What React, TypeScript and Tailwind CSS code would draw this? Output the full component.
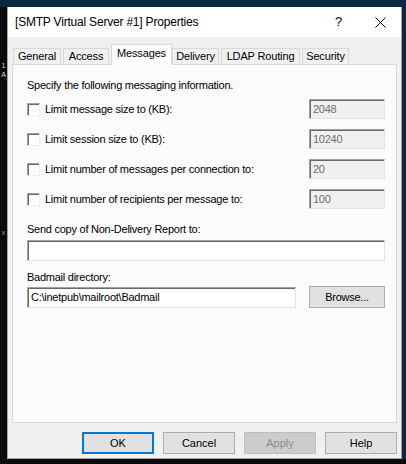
const font = { fontFamily: '"Liberation Sans", Arial, sans-serif' };

function CheckBox() {
  return (
    <div className="h-[13px] w-[13px] shrink-0 border border-t-[#a0a0a0] border-l-[#a0a0a0] border-r-[#f0f0f0] border-b-[#f0f0f0] bg-white shadow-[inset_1px_1px_0_#696969]" />
  );
}

function Field({ value, disabled, className = "" }: { value?: string; disabled?: boolean; className?: string }) {
  return (
    <div
      className={`flex items-center border border-t-[#a0a0a0] border-l-[#a0a0a0] border-r-[#e3e3e3] border-b-[#e3e3e3] pl-[3px] shadow-[inset_1px_1px_0_#696969] ${
        disabled ? "bg-[#f0f0f0] text-[#6d6d6d]" : "bg-white text-black"
      } ${className}`}
    >
      {value}
    </div>
  );
}

function Button({ label, variant = "normal" }: { label: string; variant?: "normal" | "default" | "disabled" }) {
  const look =
    variant === "default"
      ? "border-2 border-[#0078d7] bg-[#e1e1e1] text-black"
      : variant === "disabled"
      ? "border border-[#bfbfbf] bg-[#cccccc] text-[#8d8d8d]"
      : "border border-[#adadad] bg-[#e1e1e1] text-black";
  return <div className={`flex h-[22px] w-[72px] items-center justify-center text-[11px] ${look}`}>{label}</div>;
}

const limits = [
  { label: "Limit message size to (KB):", value: "2048" },
  { label: "Limit session size to (KB):", value: "10240" },
  { label: "Limit number of messages per connection to:", value: "20" },
  { label: "Limit number of recipients per message to:", value: "100" },
];

const tabs = ["General", "Access", "Messages", "Delivery", "LDAP Routing", "Security"];
const tabWidths: Record<string, string> = {
  General: "w-[48px]",
  Access: "w-[46px]",
  Messages: "w-[61px]",
  Delivery: "w-[47px]",
  "LDAP Routing": "w-[79px]",
  Security: "w-[47px]",
};

export default function App() {
  return (
    <div className="flex h-[464px] w-[406px] flex-col overflow-hidden bg-[#0b0b0b]" style={font}>
      <div className="h-[7px] shrink-0 bg-[#0f2746]" />
      <div className="flex h-[452px] shrink-0">
        <div className="flex w-[7px] shrink-0 flex-col items-center overflow-hidden bg-[#0b0b0b] text-[7px] leading-[9px] text-[#d8d8d8]">
          <span className="mt-[54px]">1</span>
          <span>A</span>
          <span className="mt-[149px] text-[#9a9a9a]">x</span>
        </div>

        <div className="flex w-[395px] shrink-0 flex-col border-x border-b border-[#a6a6a6] bg-[#f0f0f0]">
          {/* title bar */}
          <div className="flex h-[30px] shrink-0 items-center bg-white pl-[7px] text-[12px] tracking-[-0.2px] text-black">
            <span className="flex-1">[SMTP Virtual Server #1] Properties</span>
            <span className="w-[20px] text-[13px]">?</span>
            <div className="flex w-[46px] items-center justify-center pl-[4px]">
              <svg width="11" height="11" viewBox="0 0 11 11">
                <path d="M0.5 0.5L10.5 10.5M10.5 0.5L0.5 10.5" stroke="#000" strokeWidth="1" />
              </svg>
            </div>
          </div>

          {/* tab strip */}
          <div className="flex shrink-0 items-end pl-[5px] pt-[7px] text-[11px] tracking-[-0.15px]">
            {tabs.map((t) =>
              t === "Messages" ? (
                <div
                  key={t}
                  className={`relative z-10 -mb-px flex h-[21px] ${tabWidths[t]} items-center justify-center border-x border-t border-[#d9d9d9] bg-white pb-[3px] text-black`}
                >
                  {t}
                </div>
              ) : (
                <div
                  key={t}
                  className={`mr-[2px] flex h-[16px] ${tabWidths[t]} items-center justify-center border-x border-t border-[#d9d9d9] bg-[#f0f0f0] text-black`}
                >
                  {t}
                </div>
              )
            )}
          </div>

          {/* tab page */}
          <div className="mx-[4px] flex h-[359px] shrink-0 flex-col border border-[#d9d9d9] bg-[#fbfbfb] pl-[14px] pr-[11px] text-[11px] tracking-[-0.25px] text-black">
            <div className="mt-[13px] leading-[14px]">Specify the following messaging information.</div>
            {limits.map((l, i) => (
              <div key={l.label} className={`flex h-[20px] items-center ${i === 0 ? "mt-[7px]" : "mt-[10px]"}`}>
                <CheckBox />
                <span className="ml-[5px] flex-1">{l.label}</span>
                <Field value={l.value} disabled className="h-[20px] w-[76px]" />
              </div>
            ))}
            <div className="mt-[13px] leading-[14px]">Send copy of Non-Delivery Report to:</div>
            <Field className="mt-[4px] h-[21px]" />
            <div className="mt-[9px] leading-[14px]">Badmail directory:</div>
            <div className="mt-[2px] flex items-center">
              <Field value="C:\inetpub\mailroot\Badmail" className="h-[21px] w-[269px]" />
              <div className="flex-1" />
              <div className="flex h-[22px] w-[76px] items-center justify-center border border-[#adadad] bg-[#e1e1e1]">
                Browse...
              </div>
            </div>
          </div>

          {/* buttons */}
          <div className="mt-[9px] flex justify-end gap-[9px] pr-[4px]">
            <Button label="OK" variant="default" />
            <Button label="Cancel" />
            <Button label="Apply" variant="disabled" />
            <Button label="Help" />
          </div>
        </div>

        <div className="w-[4px] shrink-0 bg-[#0f2746]" />
      </div>
      <div className="flex-1 bg-[#0b0b0b]" />
    </div>
  );
}
